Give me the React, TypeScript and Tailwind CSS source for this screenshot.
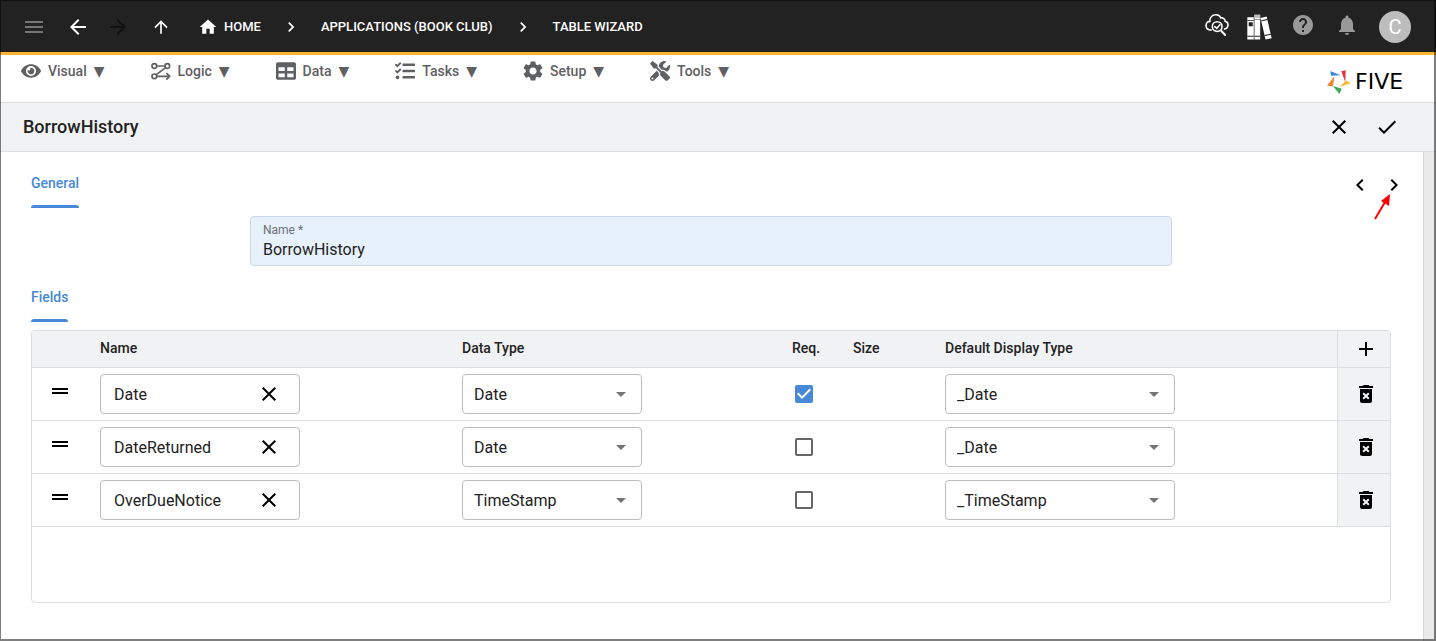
import { useState } from "react";
import type { ReactNode } from "react";
import {
  MdAdd,
  MdArrowBack,
  MdArrowDropDown,
  MdArrowForward,
  MdArrowUpward,
  MdCheck,
  MdChevronLeft,
  MdChevronRight,
  MdClose,
  MdDeleteForever,
  MdDragHandle,
  MdHelp,
  MdHome,
  MdMenu,
  MdNotifications,
  MdSettings,
} from "react-icons/md";
import { FaEye, FaTable, FaTasks, FaTools } from "react-icons/fa";

type Field = { name: string; dataType: string; required: boolean; display: string };

const initialFields: Field[] = [
  { name: "Date", dataType: "Date", required: true, display: "_Date" },
  { name: "DateReturned", dataType: "Date", required: false, display: "_Date" },
  { name: "OverDueNotice", dataType: "TimeStamp", required: false, display: "_TimeStamp" },
];

function LogicIcon() {
  return (
    <svg viewBox="453 186 60 60" className="size-5" fill="none" stroke="currentColor" strokeWidth="5">
      <circle cx="463" cy="201" r="7" />
      <circle cx="502" cy="201" r="7" />
      <circle cx="463" cy="232" r="7" />
      <path d="M470 201H495M497 206L469 227M470 232H507M499 222L509 232L499 242" />
    </svg>
  );
}

function CloudSearchIcon() {
  return (
    <svg viewBox="43 38 69 69" className="size-6" fill="none" stroke="currentColor" strokeWidth="4.5" strokeLinecap="round">
      <path d="M61 87C51 87 46 81 46 74C46 67 51 62 57 62C56 52 63 44 72 43C80 42 86 46 88 52C95 51 101 55 101 62C107 64 110 69 109 74C108 80 104 83 99 84" />
      <circle cx="78" cy="77" r="14" />
      <path d="M71 77L77 82L86 72" />
      <path d="M90 90L101 101" strokeWidth="6" />
    </svg>
  );
}

function BooksIcon() {
  return (
    <svg viewBox="170 43 74 76" className="h-[26px] w-[25px] shrink-0">
      <path fill="#fff" d="M171 52h19v66h-19zM192 45h17v73h-17zM210 54l18-4 15 64-18 4z" />
      <path fill="#bbb" d="M192 45h17v9h-17z" />
      <path fill="#222" d="M175 67h12v12h-12zM171 61h19v2h-19zM171 107h19v3h-19zM192 57h17v2h-17zM192 107h17v3h-17zM212 61l18-4 1 3-18 4zM222 105l18-4 1 3-18 4z" />
    </svg>
  );
}

function Pinwheel() {
  return (
    <svg viewBox="412 212 72 72" className="size-6">
      <path fill="#4285d8" d="M422 215L453 228L424 229Z" />
      <path fill="#e5343d" d="M455 216L468 213L467 249Z" />
      <path fill="#fbb62c" d="M469 244L484 251L449 263Z" />
      <path fill="#3aa757" d="M430 260L456 268L449 284Z" />
      <path fill="#f58235" d="M434 231L430 261L412 259Z" />
    </svg>
  );
}

function IconButton({ label, className = "", onClick, children }: {
  label: string;
  className?: string;
  onClick?: () => void;
  children: ReactNode;
}) {
  return (
    <button type="button" aria-label={label} onClick={onClick} className={`flex size-6 shrink-0 items-center justify-center ${className}`}>
      {children}
    </button>
  );
}

const menus = [
  { label: "Visual", icon: <FaEye className="size-5" /> },
  { label: "Logic", icon: <LogicIcon /> },
  { label: "Data", icon: <FaTable className="size-5" /> },
  { label: "Tasks", icon: <FaTasks className="size-5" /> },
  { label: "Setup", icon: <MdSettings className="size-6 -m-0.5" /> },
  { label: "Tools", icon: <FaTools className="size-5" /> },
];

function TopBar() {
  return (
    <header className="flex h-[55px] items-center border-b-3 border-[#fdb62f] bg-[#222] pt-0.5 pr-[25px] pl-[22px] text-white">
      <IconButton label="Menu" className="text-[#757575]"><MdMenu className="size-6" /></IconButton>
      <IconButton label="Back" className="ml-5"><MdArrowBack className="size-6" /></IconButton>
      <IconButton label="Forward" className="ml-4 text-[#111]"><MdArrowForward className="size-6" /></IconButton>
      <IconButton label="Up" className="ml-[19px]"><MdArrowUpward className="size-5" /></IconButton>
      <nav aria-label="Breadcrumb" className="ml-[25px] flex items-center text-[13px] font-medium">
        <a href="#home" className="flex items-center gap-1.5"><MdHome className="size-5" />HOME</a>
        <MdChevronRight className="mx-5 size-5" />
        <a href="#applications">APPLICATIONS (BOOK CLUB)</a>
        <MdChevronRight className="mx-5 size-5" />
        <a href="#wizard">TABLE WIZARD</a>
      </nav>
      <div className="ml-auto flex items-center">
        <div className="mb-1 flex items-center gap-5">
          <IconButton label="Inspect"><CloudSearchIcon /></IconButton>
          <IconButton label="Library" className="mt-1 -ml-0.5"><BooksIcon /></IconButton>
          <IconButton label="Help" className="text-[#999]"><MdHelp className="size-6" /></IconButton>
          <IconButton label="Notifications" className="text-[#999]"><MdNotifications className="size-6" /></IconButton>
        </div>
        <button type="button" className="ml-5 flex size-8 items-center justify-center rounded-full bg-[#bdbdbd] text-xl">C</button>
      </div>
    </header>
  );
}

function MenuBar() {
  return (
    <div className="flex h-12 items-start justify-between border-b border-[#dcdee0] pr-5 pl-[21px]">
      <nav className="flex gap-[46px] pt-1.5 text-sm font-medium text-[#5f6062]">
        {menus.map((menu) => (
          <button key={menu.label} type="button" className="flex items-center gap-[7px]">
            {menu.icon}
            <span>{menu.label}</span>
            <span>▼</span>
          </button>
        ))}
      </nav>
      <a href="#five" className="flex w-[89px] items-center gap-1 self-end pb-2 text-black">
        <Pinwheel />
        <span className="font-['DejaVu_Sans'] text-[22px] leading-6">FIVE</span>
      </a>
    </div>
  );
}

function Tab({ children }: { children: ReactNode }) {
  return (
    <div className="relative w-fit pb-[15px] text-sm font-medium text-[#4788d8]">
      {children}
      <div className="absolute inset-x-0 bottom-0 h-[3px] rounded-t-sm bg-[#4788d8]" />
    </div>
  );
}

function SelectBox({ label, value, options, onChange, className }: {
  label: string;
  value: string;
  options: string[];
  onChange: (value: string) => void;
  className: string;
}) {
  return (
    <div className={`relative h-10 ${className}`}>
      <select
        aria-label={label}
        value={value}
        onChange={(event) => onChange(event.target.value)}
        className="size-full appearance-none rounded border border-[#bdbdbd] bg-white pt-0.5 pr-8 pl-[11px] text-base text-[#222]"
      >
        {options.map((option) => <option key={option}>{option}</option>)}
      </select>
      <MdArrowDropDown className="pointer-events-none absolute top-2 right-[9px] size-6 text-[#757575]" />
    </div>
  );
}

function FieldsTable() {
  const [fields, setFields] = useState(initialFields);
  const update = (index: number, patch: Partial<Field>) =>
    setFields(fields.map((field, i) => (i === index ? { ...field, ...patch } : field)));
  const add = () => setFields([...fields, { name: "", dataType: "Date", required: false, display: "_Date" }]);

  return (
    <div className="mt-2 grow overflow-hidden rounded border border-[#dcdee0]">
      <table className="w-full table-fixed border-separate border-spacing-0 text-sm text-[#222]">
        <thead>
          <tr className="h-[37px] bg-[#f1f2f4] text-left [&>th]:border-b [&>th]:border-[#dcdee0] [&>th]:p-0 [&>th]:pb-0.5 [&>th]:font-medium">
            <th className="w-[68px]" aria-label="Reorder" />
            <th className="w-[362px]">Name</th>
            <th className="w-[330px]">Data Type</th>
            <th className="w-[61px]">Req.</th>
            <th className="w-[92px]">Size</th>
            <th>Default Display Type</th>
            <th className="w-[53px] border-l">
              <IconButton label="Add field" onClick={add} className="mt-0.5 ml-4 text-black"><MdAdd className="size-6" /></IconButton>
            </th>
          </tr>
        </thead>
        <tbody>
          {fields.map((field, index) => (
            <tr key={index} className="h-[53px] [&>td]:border-b [&>td]:border-[#dcdee0] [&>td]:p-0">
              <td>
                <IconButton label="Reorder field" className="mb-1.5 ml-4 text-black"><MdDragHandle className="size-6" /></IconButton>
              </td>
              <td>
                <div className="flex h-10 w-[200px] items-center rounded border border-[#bdbdbd] pr-[18px] pl-[13px]">
                  <input
                    aria-label="Field name"
                    value={field.name}
                    onChange={(event) => update(index, { name: event.target.value })}
                    className="min-w-0 flex-1 pt-0.5 text-base outline-none"
                  />
                  <IconButton label="Clear name" onClick={() => update(index, { name: "" })} className="text-black">
                    <MdClose className="size-6" />
                  </IconButton>
                </div>
              </td>
              <td>
                <SelectBox label="Data type" value={field.dataType} options={["Date", "TimeStamp"]} onChange={(dataType) => update(index, { dataType })} className="w-[180px]" />
              </td>
              <td>
                <div className="relative ml-[3px] size-[18px]">
                  <input
                    type="checkbox"
                    aria-label="Required"
                    checked={field.required}
                    onChange={(event) => update(index, { required: event.target.checked })}
                    className="peer block size-full appearance-none rounded-xs border-2 border-[#666] checked:border-[#4788d8] checked:bg-[#4788d8]"
                  />
                  <svg viewBox="3 3 18 18" className="pointer-events-none absolute inset-0 hidden text-white peer-checked:block" fill="currentColor">
                    <path d="M10 17l-5-5 1.41-1.41L10 14.17l7.59-7.59L19 8l-9 9z" />
                  </svg>
                </div>
              </td>
              <td />
              <td>
                <SelectBox label="Default display type" value={field.display} options={["_Date", "_TimeStamp"]} onChange={(display) => update(index, { display })} className="w-[230px]" />
              </td>
              <td className="border-l bg-[#f1f2f4]">
                <IconButton label="Delete field" onClick={() => setFields(fields.filter((_, i) => i !== index))} className="ml-4 text-black">
                  <MdDeleteForever className="size-6" />
                </IconButton>
              </td>
            </tr>
          ))}
        </tbody>
      </table>
    </div>
  );
}

export default function App() {
  const [name, setName] = useState("BorrowHistory");
  return (
    <div className="relative flex min-h-screen flex-col bg-white font-[Roboto,'DejaVu_Sans',sans-serif] text-[#222]">
      <TopBar />
      <MenuBar />
      <div className="flex h-[49px] items-center border-b border-[#dcdee0] bg-[#f1f2f4] pr-[37px] pl-[23px] text-black">
        <h1 className="text-lg font-medium text-[#222]">BorrowHistory</h1>
        <div className="ml-auto flex gap-6">
          <IconButton label="Cancel"><MdClose className="size-6" /></IconButton>
          <IconButton label="Save"><MdCheck className="size-6" /></IconButton>
        </div>
      </div>
      <div className="flex grow">
        <main className="flex grow flex-col pt-[21px] pr-8 pb-[38px] pl-[31px]">
          <div className="-mr-[15px] flex items-start justify-between">
            <Tab>General</Tab>
            <div className="flex gap-2.5 text-black">
              <IconButton label="Previous record"><MdChevronLeft className="size-6" /></IconButton>
              <IconButton label="Next record" className="relative">
                <MdChevronRight className="size-6" />
                <svg viewBox="0 0 18 28" className="absolute top-5 -left-2 h-7 w-[18px]">
                  <path d="M1 26L11 9" stroke="#f00" strokeWidth="2" />
                  <path d="M16 1L15 13L7 8Z" fill="#f00" />
                </svg>
              </IconButton>
            </div>
          </div>
          <div className="mx-auto mt-2 flex h-[50px] w-full max-w-[922px] flex-col rounded border border-[#c9d9e9] bg-[#e7f1fc] px-3 pt-1">
            <label htmlFor="table-name" className="text-xs leading-[18px] text-[#6b6f75]">Name *</label>
            <input id="table-name" value={name} onChange={(event) => setName(event.target.value)} className="h-[22px] w-full bg-transparent text-base outline-none" />
          </div>
          <div className="mt-[21px]"><Tab>Fields</Tab></div>
          <FieldsTable />
        </main>
        <div className="w-[13px] shrink-0 border-l border-[#d8d8d8] bg-[#eaeaea]" />
      </div>
      <div className="pointer-events-none absolute inset-0 border-t border-r-2 border-b-2 border-l border-black/50" />
    </div>
  );
}
